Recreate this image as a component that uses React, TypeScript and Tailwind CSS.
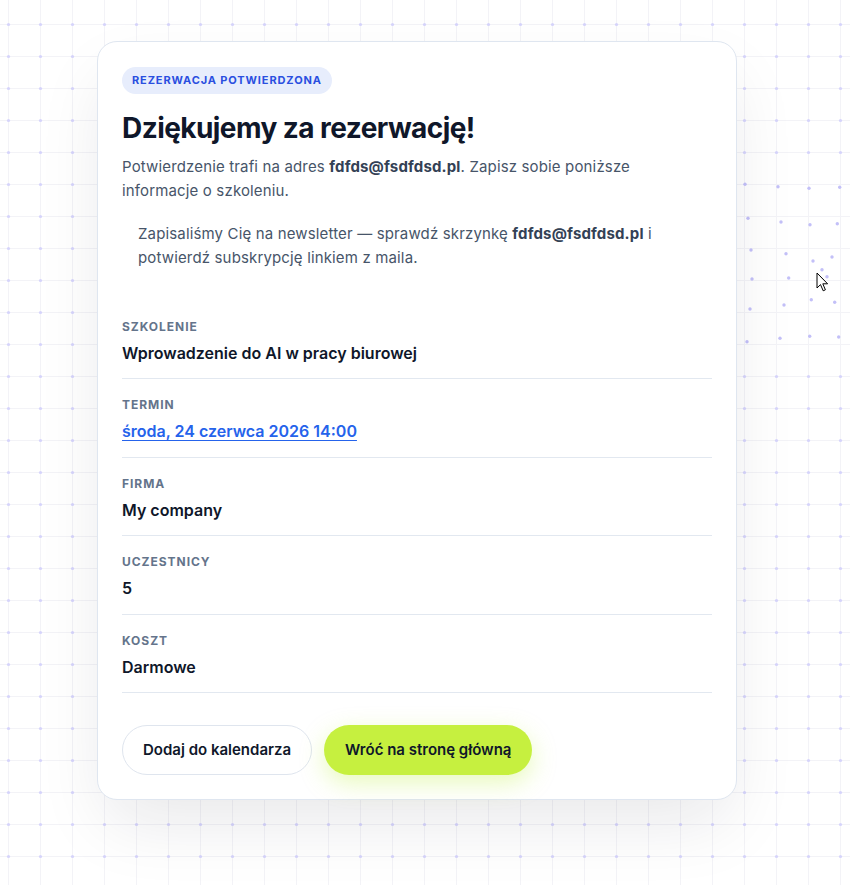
import React from "react";

const W = 850;
const H = 885;

const displaced: Record<string, [number, number]> = {
  "744,184": [745, 184.3],
  "776,184": [778, 186.7],
  "808,184": [809, 188.3],
  "840,184": [839.7, 187.3],
  "744,216": [748, 218.3],
  "776,216": [781, 222],
  "808,216": [810, 224.7],
  "840,216": [837.3, 223.7],
  "744,248": [751, 250],
  "776,248": [786, 253.7],
  "808,248": [813, 261],
  "840,248": [832, 257],
  "744,280": [752, 279],
  "776,280": [788.7, 278],
  "808,280": [822, 269.7],
  "840,280": [827, 276.7],
  "744,312": [750, 309],
  "776,312": [784, 305],
  "808,312": [811.3, 299.7],
  "840,312": [834.7, 302.3],
  "744,344": [747, 341.7],
  "776,344": [780, 338.3],
  "808,344": [809.7, 336.3],
  "840,344": [838.7, 337],
};

function GridBackdrop() {
  const xs: number[] = [];
  const ys: number[] = [];
  for (let x = 8; x < W; x += 32) xs.push(x);
  for (let y = 24; y < H; y += 32) ys.push(y);
  const dots: React.ReactNode[] = [];
  for (const y of ys) {
    for (const x of xs) {
      const key = `${x},${y}`;
      const d = displaced[key];
      if (d) {
        dots.push(<circle key={key} cx={d[0]} cy={d[1]} r={1.7} fill="#c3c0f8" />);
      } else {
        dots.push(<circle key={key} cx={x + 0.5} cy={y + 0.5} r={1.6} fill="#d6d4fb" />);
      }
    }
  }
  return (
    <svg className="absolute inset-0" width={W} height={H} viewBox={`0 0 ${W} ${H}`}>
      {xs.map((x) => (
        <rect key={`vx${x}`} x={x} y={0} width={1} height={H} fill="#f3f3f7" />
      ))}
      {ys.map((y) => (
        <rect key={`hy${y}`} x={0} y={y} width={W} height={1} fill="#f3f3f7" />
      ))}
      {dots}
    </svg>
  );
}

function Cursor() {
  return (
    <svg className="absolute left-[816px] top-[272px]" width="14" height="21" viewBox="0 0 14 21">
      <path
        d="M1 1 L1 16 L4.5 12.6 L7.2 18.8 L9.4 17.8 L6.8 11.8 L11.6 11.8 Z"
        fill="#ffffff"
        stroke="#000000"
        strokeWidth="1"
        strokeLinejoin="miter"
      />
    </svg>
  );
}

function Row({ label, children }: { label: string; children: React.ReactNode }) {
  return (
    <div className="border-b border-[#e2e8f0] pt-[18px] pb-[13.5px]">
      <div className="text-[12px] leading-4 font-bold uppercase tracking-[0.08em] text-[#64748b]">{label}</div>
      <div className="mt-[6px] text-[16px] leading-6 font-semibold text-[#0f172a]">{children}</div>
    </div>
  );
}

export default function App() {
  return (
    <div className="relative h-[885px] w-full overflow-hidden bg-white font-[Inter,'Noto_Sans',sans-serif]">
      <GridBackdrop />
      <div className="relative pt-[41px] pl-[97px]">
        <div className="w-[640px] rounded-[20px] border border-[#dfe6f0] bg-white p-6 shadow-[0_30px_70px_-10px_rgba(15,23,42,0.10)]">
          <span className="inline-flex h-[27px] items-center rounded-full bg-[#e7edfc] px-[10px] text-[11px] font-bold tracking-[0.08em] text-[#2a4fe0]">
            REZERWACJA POTWIERDZONA
          </span>
          <h1 className="mt-4 text-[28px] leading-9 font-bold tracking-[-0.02em] text-[#0f172a]">
            Dziękujemy za rezerwację!
          </h1>
          <p className="mt-[9px] max-w-[560px] text-[15px] leading-6 tracking-[0.01em] text-[#475569]">
            Potwierdzenie trafi na adres <strong className="font-bold text-[#334155]">fdfds@fsdfdsd.pl</strong>. Zapisz sobie poniższe informacje o szkoleniu.
          </p>
          <p className="mt-[19px] pl-4 text-[15px] leading-6 tracking-[0.01em] text-[#475569]">
            Zapisaliśmy Cię na newsletter — sprawdź skrzynkę <strong className="font-bold text-[#334155]">fdfds@fsdfdsd.pl</strong> i potwierdź subskrypcję linkiem z maila.
          </p>
          <div className="mt-[31px]">
            <Row label="Szkolenie">Wprowadzenie do AI w pracy biurowej</Row>
            <Row label="Termin">
              <a href="#" className="text-[#2563eb] underline underline-offset-[3px]">
                środa, 24 czerwca 2026 14:00
              </a>
            </Row>
            <Row label="Firma">My company</Row>
            <Row label="Uczestnicy">5</Row>
            <Row label="Koszt">Darmowe</Row>
          </div>
          <div className="mt-[32px] flex gap-3">
            <button className="h-[50px] rounded-full border border-[#dfe5ee] bg-white px-5 text-[15px] font-semibold text-[#0f172a]">
              Dodaj do kalendarza
            </button>
            <button className="h-[50px] rounded-full bg-[#c6f03f] px-[21px] text-[15px] font-semibold text-[#0f172a] shadow-[0_8px_24px_rgba(190,240,60,0.35)]">
              Wróć na stronę główną
            </button>
          </div>
        </div>
      </div>
      <Cursor />
    </div>
  );
}
